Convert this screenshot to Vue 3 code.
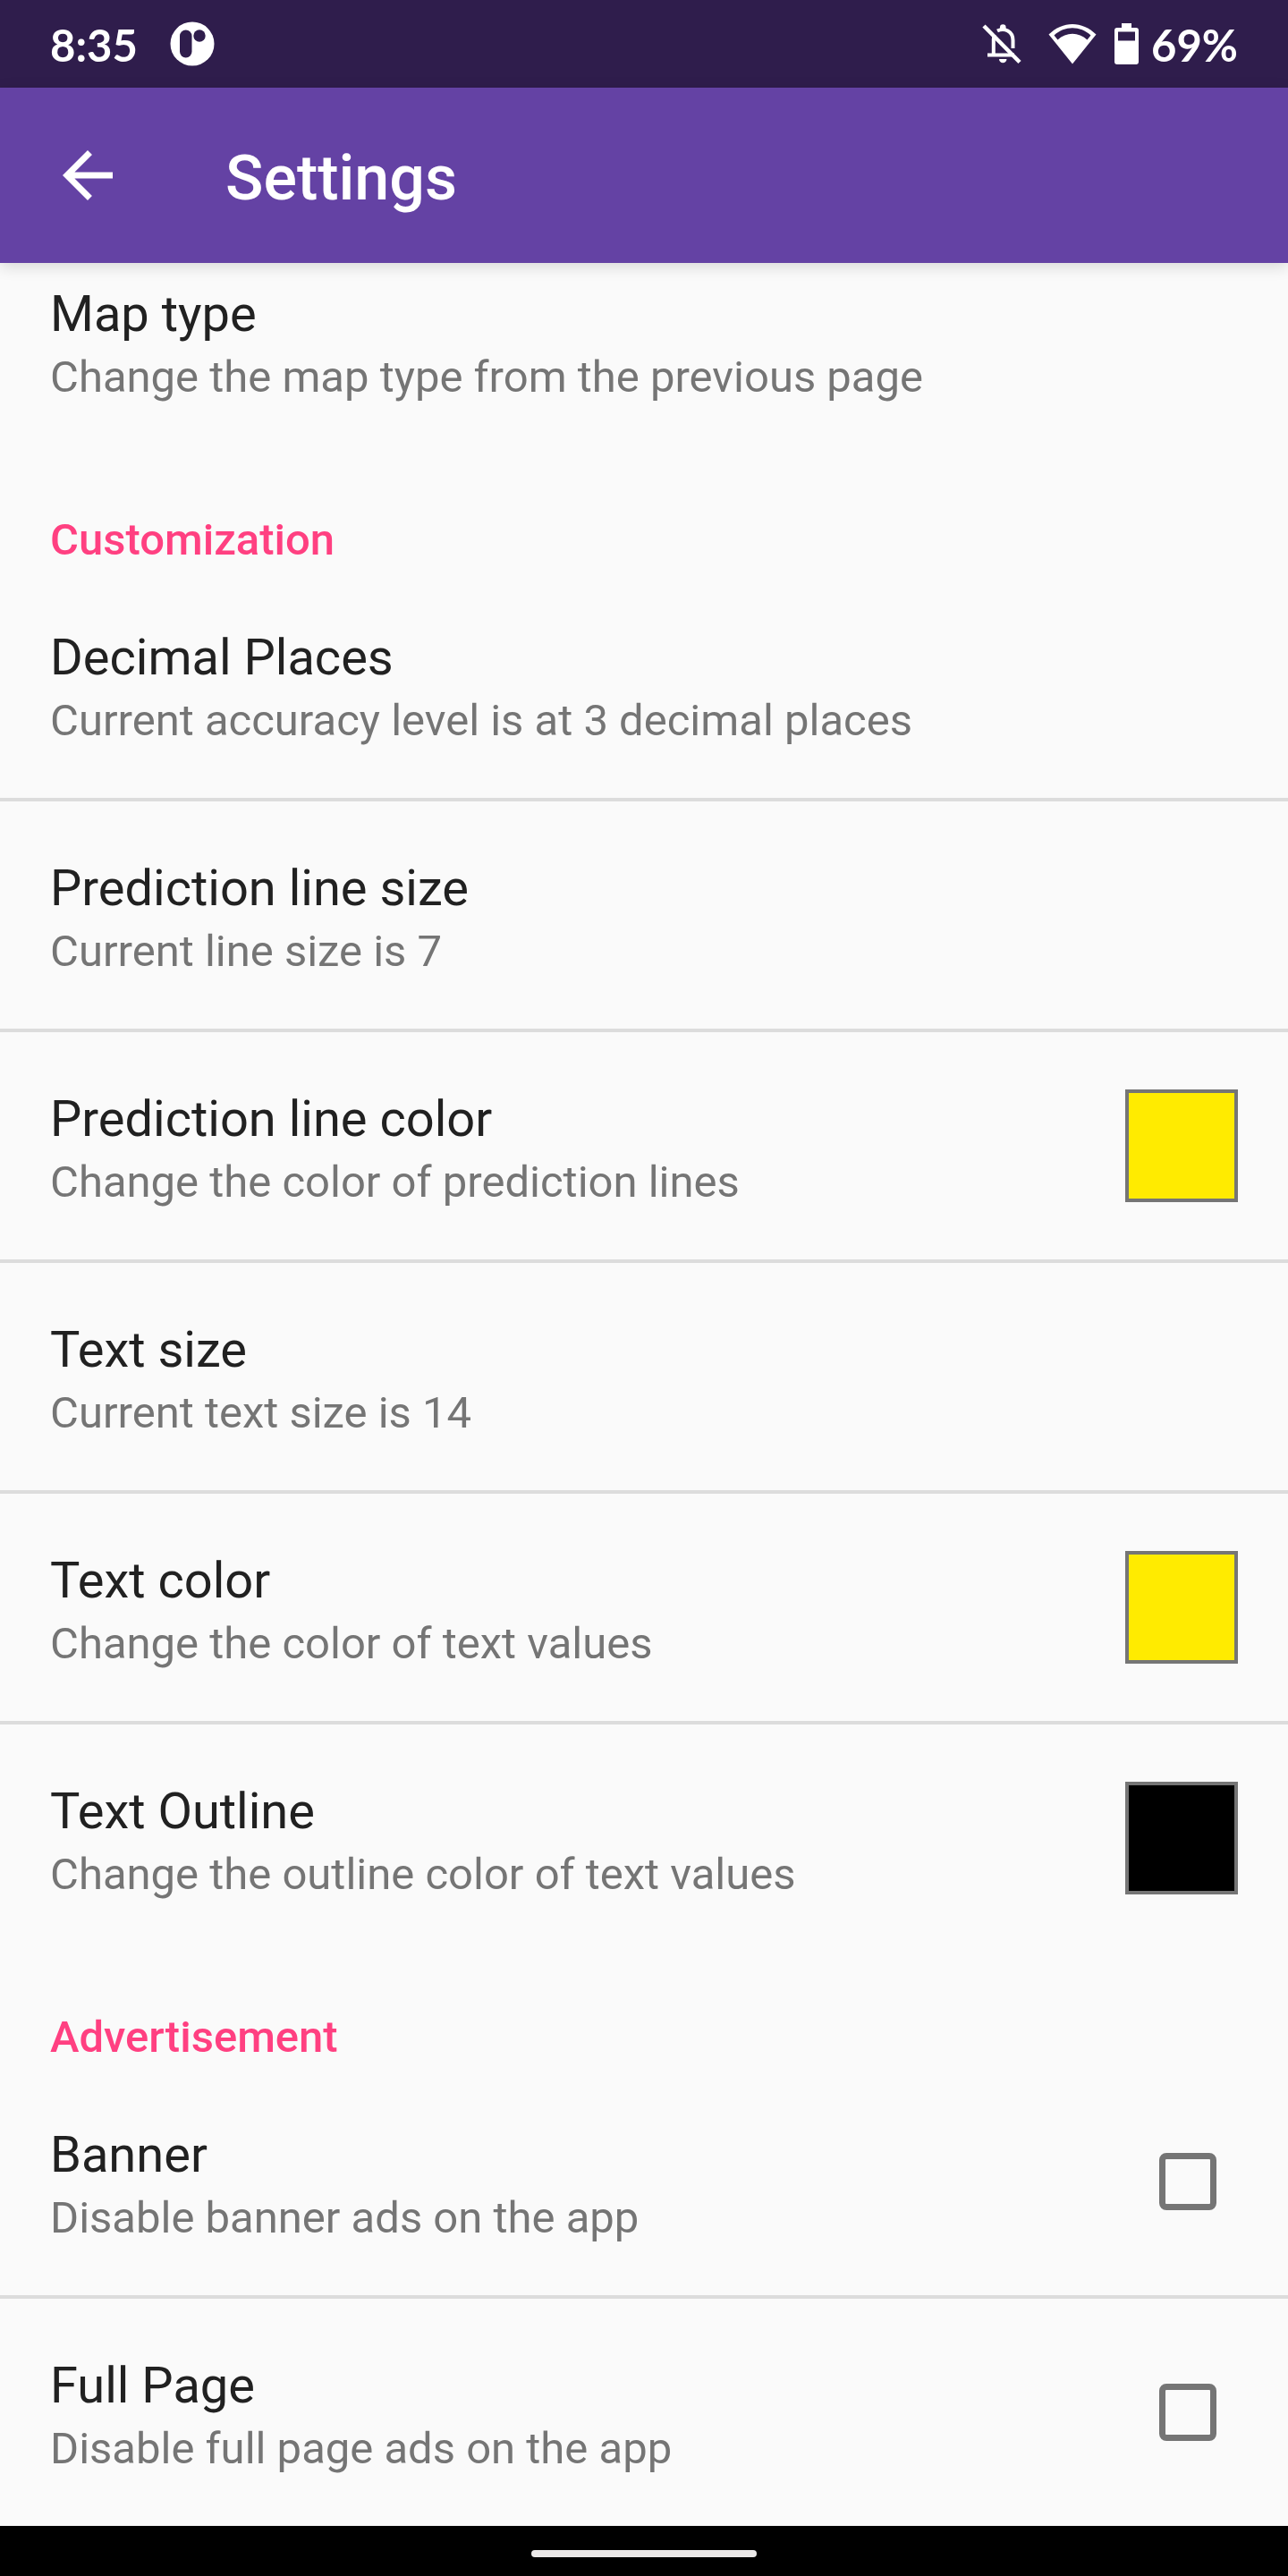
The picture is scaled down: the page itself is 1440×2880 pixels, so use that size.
<script setup>
import { ref } from 'vue'

const sections = ref([
  {
    id: 'map',
    title: '',
    items: [{ title: 'Map type', summary: 'Change the map type from the previous page' }],
  },
  {
    id: 'customization',
    title: 'Customization',
    items: [
      { title: 'Decimal Places', summary: 'Current accuracy level is at 3 decimal places' },
      { title: 'Prediction line size', summary: 'Current line size is 7' },
      { title: 'Prediction line color', summary: 'Change the color of prediction lines', color: '#ffeb00' },
      { title: 'Text size', summary: 'Current text size is 14' },
      { title: 'Text color', summary: 'Change the color of text values', color: '#ffeb00' },
      { title: 'Text Outline', summary: 'Change the outline color of text values', color: '#000000' },
    ],
  },
  {
    id: 'advertisement',
    title: 'Advertisement',
    items: [
      { title: 'Banner', summary: 'Disable banner ads on the app', checked: false },
      { title: 'Full Page', summary: 'Disable full page ads on the app', checked: false },
    ],
  },
])
</script>

<template>
  <div class="screen">
    <div class="status">
      <div class="status-side">
        <span class="status-text">8:35</span>
        <svg class="app-icon" viewBox="0 0 50 50" aria-hidden="true">
          <circle cx="25" cy="25" r="24.5" fill="#fff" />
          <rect x="11" y="9.5" width="13.5" height="31" rx="6.7" fill="#2f1d4c" />
          <circle cx="33" cy="16" r="6.7" fill="#2f1d4c" />
        </svg>
      </div>
      <div class="status-side">
        <svg class="bell" viewBox="0 0 44 46" aria-hidden="true">
          <g fill="none" stroke="#fff" stroke-width="4">
            <path d="M6 35.5H36M12.8 35V18C12.8 16 13.3 14.5 14 13" />
            <path d="M17 8.5C25 4.5 34.5 9 34.5 19V28" />
            <path d="M2 3L42 43.5" stroke-width="4.5" />
          </g>
          <path d="M20 8V4.5a3.3 3.3 0 0 1 6.6 0V8zM19 40h8.5a4.2 4.2 0 0 1-8.5 0z" fill="#fff" />
        </svg>
        <svg class="wifi" viewBox="0 0 54 46" aria-hidden="true">
          <path d="M0.5 12.5C16-3 38-3 53.5 12.5L27 45.5z" fill="#fff" />
          <path d="M6.5 13.5C18 2.500 36 2.500 47.500 13.5L43.500 18.5C34 9.500 20 9.500 10.500 18.5z" fill="#2f1d4c" />
        </svg>
        <svg class="battery" viewBox="0 0 27 46" aria-hidden="true">
          <path fill-rule="evenodd" d="M8 0h11v5h5a3 3 0 0 1 3 3v35a3 3 0 0 1-3 3H3a3 3 0 0 1-3-3V8a3 3 0 0 1 3-3h5zM4 9.5v10h19v-10z" fill="#fff" />
        </svg>
        <span class="status-text level">69%</span>
      </div>
    </div>

    <header class="app-bar">
      <button class="back" type="button" aria-label="Navigate up">
        <svg viewBox="0 0 24 24" aria-hidden="true">
          <path d="M20 11H7.83l5.59-5.59L12 4l-8 8 8 8 1.41-1.41L7.83 13H20v-2z" fill="#fff" />
        </svg>
      </button>
      <h1>Settings</h1>
    </header>

    <main class="list">
      <section v-for="section in sections" :key="section.id">
        <h2 v-if="section.title">{{ section.title }}</h2>
        <component
          :is="item.checked === undefined ? 'button' : 'label'"
          v-for="item in section.items"
          :key="item.title"
          class="row"
          :type="item.checked === undefined ? 'button' : undefined"
        >
          <span class="texts">
            <span class="title">{{ item.title }}</span>
            <span class="summary">{{ item.summary }}</span>
          </span>
          <span v-if="item.color" class="swatch" :style="{ backgroundColor: item.color }"></span>
          <input v-if="item.checked !== undefined" v-model="item.checked" class="check" type="checkbox" />
        </component>
      </section>
    </main>

    <footer class="nav"><span class="pill"></span></footer>
  </div>
</template>

<style>
body {
  margin: 0;
  background: #fafafa;
}
</style>

<style scoped>
.screen {
  display: flex;
  flex-direction: column;
  min-height: 100vh;
  background: #fafafa;
  font-family: Roboto, "Liberation Sans", sans-serif;
}

.status {
  display: flex;
  justify-content: space-between;
  box-sizing: border-box;
  height: 98px;
  padding: 0 56px;
  background: #2f1d4c;
}

.status-side {
  display: flex;
  align-items: center;
}

.status-text {
  padding-top: 2px;
  color: #fff;
  font-family: Lato, Roboto, sans-serif;
  font-size: 49px;
  font-weight: 700;
  line-height: 60px;
}

.level {
  margin-left: 14px;
}

.app-icon {
  width: 50px;
  height: 50px;
  margin-left: 36px;
}

.bell {
  width: 44px;
  height: 46px;
}

.wifi {
  width: 54px;
  height: 46px;
  margin-left: 30px;
}

.battery {
  width: 27px;
  height: 46px;
  margin-left: 20px;
}

.app-bar {
  position: relative;
  display: flex;
  align-items: center;
  height: 196px;
  padding: 0 56px;
  background: #6442a4;
  box-shadow: 0 4px 16px rgba(0, 0, 0, 0.14);
}

.back {
  width: 84px;
  height: 84px;
  padding: 0;
  border: 0;
  background: none;
}

.back svg {
  display: block;
  width: 84px;
  height: 84px;
}

h1 {
  margin: 0;
  padding: 6px 0 0 112px;
  color: #fff;
  font-size: 70px;
  font-weight: 500;
  line-height: 82px;
}

.list {
  flex: 1;
}

h2 {
  margin: 0;
  padding: 62px 56px 0;
  color: #ff4081;
  font-size: 49px;
  font-weight: 500;
  line-height: 68px;
}

.row {
  display: flex;
  align-items: center;
  justify-content: space-between;
  box-sizing: border-box;
  width: 100%;
  min-height: 254px;
  padding: 0 56px;
  border: 0;
  background: none;
  font-family: inherit;
  text-align: left;
}

.row + .row {
  min-height: 258px;
  border-top: 4px solid #dcdcdc;
}

section:first-child .row {
  min-height: 214px;
  padding-bottom: 40px;
}

.texts {
  display: flex;
  flex-direction: column;
  padding-top: 8px;
}

.title {
  color: #212121;
  font-size: 56px;
  line-height: 74px;
}

.summary {
  color: #757575;
  font-size: 49px;
  line-height: 68px;
}

.swatch {
  box-sizing: border-box;
  width: 126px;
  height: 126px;
  border: 4px solid #757575;
}

.check {
  appearance: none;
  box-sizing: border-box;
  width: 64px;
  height: 64px;
  margin: 0 24px 0 0;
  border: 7px solid #757575;
  border-radius: 8px;
}

.check:checked {
  background: #757575;
}

.nav {
  display: flex;
  justify-content: center;
  align-items: center;
  box-sizing: border-box;
  height: 56px;
  padding-top: 6px;
  background: #000;
}

.pill {
  width: 252px;
  height: 8px;
  border-radius: 4px;
  background: #ebe9e9;
}
</style>
